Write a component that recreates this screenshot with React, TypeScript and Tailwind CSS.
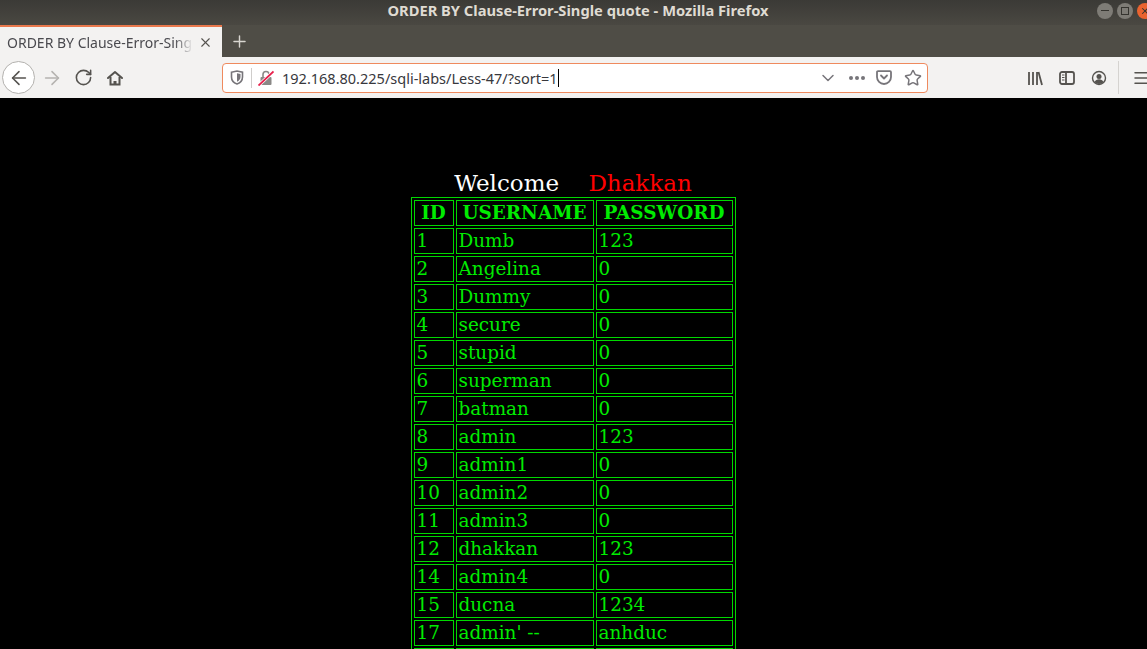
import { ArrowLeft, ArrowRight, Plus, RotateCw, X, Menu, ChevronDown, Star } from 'lucide-react';

const rows = [
  ['1', 'Dumb', '123'],
  ['2', 'Angelina', '0'],
  ['3', 'Dummy', '0'],
  ['4', 'secure', '0'],
  ['5', 'stupid', '0'],
  ['6', 'superman', '0'],
  ['7', 'batman', '0'],
  ['8', 'admin', '123'],
  ['9', 'admin1', '0'],
  ['10', 'admin2', '0'],
  ['11', 'admin3', '0'],
  ['12', 'dhakkan', '123'],
  ['14', 'admin4', '0'],
  ['15', 'ducna', '1234'],
  ['17', "admin' --", 'anhduc'],
  ['\u00a0', '\u00a0', '\u00a0'],
];

function HomeIcon() {
  return (
    <svg width="16" height="16" viewBox="0 0 16 16" fill="none" stroke="#55534f" strokeWidth="2">
      <path d="M1 8l7-6 7 6" strokeLinejoin="round" strokeLinecap="round" />
      <path d="M3.5 7v7.5h9V7" />
      <path d="M8 14v-3" strokeWidth="3" />
    </svg>
  );
}

function ShieldIcon() {
  return (
    <svg width="14" height="15" viewBox="0 0 14 15" fill="none">
      <path d="M1.5 2.2L7 1l5.5 1.2V7c0 3.5-2.5 6-5.5 7-3-1-5.5-3.5-5.5-7z" stroke="#77757a" strokeWidth="1.6" />
      <path d="M7 3.2l3.5.8V7c0 2.2-1.500 3.800-3.500 4.800z" fill="#77757a" />
    </svg>
  );
}

function BrokenLockIcon() {
  return (
    <svg width="16" height="16" viewBox="0 0 16 16" fill="none">
      <path d="M5 7V4.500a3 3 0 0 1 6 0V7" stroke="#8a8886" strokeWidth="1.600" />
      <rect x="2.500" y="7" width="11" height="8" rx="1" fill="#8a8886" />
      <path d="M0.500 15.500L15.500 1.500" stroke="#ffffff" strokeWidth="3.200" />
      <path d="M0.500 15.500L15.500 1.500" stroke="#e8204c" strokeWidth="1.800" />
    </svg>
  );
}

function PocketIcon() {
  return (
    <svg width="16" height="15" viewBox="0 0 16 15" fill="none" stroke="#77757a">
      <path d="M1 2.200a1 1 0 0 1 1-1h12a1 1 0 0 1 1 1V7a7 7 0 0 1-14 0z" strokeWidth="1.800" />
      <path d="M5 5.500l3 3 3-3" strokeWidth="1.800" strokeLinecap="round" strokeLinejoin="round" />
    </svg>
  );
}

function LibraryIcon() {
  return (
    <svg width="16" height="16" viewBox="0 0 16 16" fill="none" stroke="#55534f" strokeWidth="1.800">
      <path d="M2 2v13M6 2v13M10 2v13M11.500 2l3.500 13" />
    </svg>
  );
}

function SidebarIcon() {
  return (
    <svg width="16" height="16" viewBox="0 0 16 16" fill="none" stroke="#55534f">
      <rect x="1" y="2" width="14" height="12" rx="2" strokeWidth="1.800" />
      <path d="M7 2v12" strokeWidth="1.800" />
      <path d="M3 5h2.500M3 7.500h2.500M3 10h2.500" strokeWidth="1.200" />
    </svg>
  );
}

function AccountIcon() {
  return (
    <svg width="16" height="16" viewBox="0 0 16 16" fill="none">
      <circle cx="8" cy="8" r="6.500" stroke="#55534f" strokeWidth="1.400" />
      <circle cx="8" cy="6.500" r="2.500" fill="#55534f" />
      <path d="M3.500 12c1-2 2.500-2.800 4.500-2.800s3.500.8 4.500 2.800c-1 1.200-2.500 2-4.500 2s-3.500-.8-4.500-2z" fill="#55534f" />
    </svg>
  );
}

export default function App() {
  return (
    <div className="h-[649px] w-[1147px] overflow-hidden flex flex-col bg-black">
      {/* Window title bar */}
      <div className="h-[25px] shrink-0 pb-[4px] bg-gradient-to-b from-[#3b3a36] to-[#4a4842] flex items-center justify-between font-['Noto_Sans',sans-serif]">
        <div className="w-[60px]" />
        <span className="text-[14.700px] font-bold text-[#dfdbd2] pl-[4px] whitespace-nowrap">ORDER BY Clause-Error-Single quote - Mozilla Firefox</span>
        <div className="w-[55px] flex items-center gap-[4px] pl-[5px] overflow-hidden">
          <span className="w-4 h-4 shrink-0 rounded-full bg-[#7e7c76] flex items-center justify-center">
            <span className="w-2 h-px bg-[#35342f]" />
          </span>
          <span className="w-4 h-4 shrink-0 rounded-full bg-[#7e7c76] flex items-center justify-center">
            <span className="w-[8px] h-[8px] border border-[#35342f]" />
          </span>
          <span className="w-4 h-4 shrink-0 rounded-full bg-[#e9632f] flex items-center justify-center">
            <X size={10} strokeWidth={2.500} className="text-[#35342f]" />
          </span>
        </div>
      </div>

      {/* Tab strip */}
      <div className="h-[32px] shrink-0 bg-[#4f4d46] flex items-stretch font-['Noto_Sans',sans-serif]">
        <div className="w-[222px] bg-[#f3f2f1] border-t-[2px] border-[#e9784c] flex items-center pl-[7px] pr-[8px]">
          <span className="w-[186px] whitespace-nowrap text-[14px] text-[#4a4a4f] [mask-image:linear-gradient(to_right,black_90%,transparent)]">ORDER BY Clause-Error-Sing</span>
          <X size={15} strokeWidth={1.800} className="text-[#55534f] ml-[5px] shrink-0" />
        </div>
        <div className="w-[35px] flex items-center justify-center">
          <Plus size={19} strokeWidth={1.800} className="text-[#d8d6d0]" />
        </div>
      </div>

      {/* Nav toolbar */}
      <div className="h-[42px] shrink-0 bg-[#f3f2f1] flex items-center border-b border-black font-['Noto_Sans',sans-serif]">
        <div className="w-[33px] h-[33px] shrink-0 ml-[2px] rounded-full border border-[#b3b1ae] bg-white flex items-center justify-center">
          <ArrowLeft size={22} strokeWidth={1.700} className="text-[#55534f]" />
        </div>
        <ArrowRight size={22} strokeWidth={1.700} className="text-[#b5b3b0] ml-[6px] shrink-0" />
        <RotateCw size={19} strokeWidth={2} className="text-[#55534f] ml-[11px] shrink-0" />
        <div className="ml-[14px] shrink-0">
          <HomeIcon />
        </div>
        <div className="ml-[99px] w-[706px] shrink-0 h-[30px] rounded-[4px] border border-[#ef8a5e] bg-white flex items-center">
          <div className="w-[28px] flex justify-center">
            <ShieldIcon />
          </div>
          <div className="w-px h-[20px] bg-[#cfcdcb]" />
          <div className="ml-[6px]">
            <BrokenLockIcon />
          </div>
          <span className="relative ml-[8px] text-[14.500px] text-[#38383d] leading-[18px]">
            192.168.80.225/sqli-labs/Less-47/?sort=1
            <span className="absolute right-[-1px] top-0 w-px h-[18px] bg-black" />
          </span>
          <div className="ml-auto flex items-center">
            <ChevronDown size={20} strokeWidth={1.800} className="text-[#77757a]" />
            <span className="ml-[11px] flex gap-[2px]">
              <span className="w-[4px] h-[4px] rounded-full bg-[#77757a]" />
              <span className="w-[4px] h-[4px] rounded-full bg-[#77757a]" />
              <span className="w-[4px] h-[4px] rounded-full bg-[#77757a]" />
            </span>
            <div className="ml-[11px]">
              <PocketIcon />
            </div>
            <Star size={18} strokeWidth={2} className="text-[#77757a] ml-[12px] mr-[5px]" />
          </div>
        </div>
        <div className="ml-[99px] shrink-0">
          <LibraryIcon />
        </div>
        <div className="ml-[16px] shrink-0">
          <SidebarIcon />
        </div>
        <div className="ml-[16px] shrink-0">
          <AccountIcon />
        </div>
        <div className="ml-[11px] w-px h-[33px] bg-[#d5d3d0] shrink-0" />
        <Menu size={18} strokeWidth={2} className="text-[#55534f] ml-[13px] shrink-0" />
      </div>

      {/* Page */}
      <div className="flex-1 min-h-0 overflow-hidden bg-black font-['DejaVu_Serif',serif] text-[18.400px] flex flex-col items-center pt-[70px]">
        <div className="h-[28px] leading-[28px] whitespace-pre text-[23px] mr-[1px]">
          <span className="text-white">Welcome</span>
          <span className="text-white">{'    '}</span>
          <span className="text-[#ff0000]">Dhakkan</span>
        </div>
        <table className="border-separate border-spacing-[2px] border border-[#00d800] text-[#00ec00] shrink-0 ml-[-1px]">
          <thead>
            <tr>
              <th className="border border-[#00d800] w-[40px] h-[26px] p-0 text-center font-bold leading-[24px]">ID</th>
              <th className="border border-[#00d800] w-[138px] h-[26px] p-0 text-center font-bold leading-[24px]">USERNAME</th>
              <th className="border border-[#00d800] w-[137px] h-[26px] p-0 text-center font-bold leading-[24px]">PASSWORD</th>
            </tr>
          </thead>
          <tbody>
            {rows.map((r, i) => (
              <tr key={i}>
                <td className="border border-[#00d800] h-[26px] p-0 pl-[2px] leading-[24px]">{r[0]}</td>
                <td className="border border-[#00d800] h-[26px] p-0 pl-[2px] leading-[24px]">{r[1]}</td>
                <td className="border border-[#00d800] h-[26px] p-0 pl-[2px] leading-[24px]">{r[2]}</td>
              </tr>
            ))}
          </tbody>
        </table>
      </div>
    </div>
  );
}
